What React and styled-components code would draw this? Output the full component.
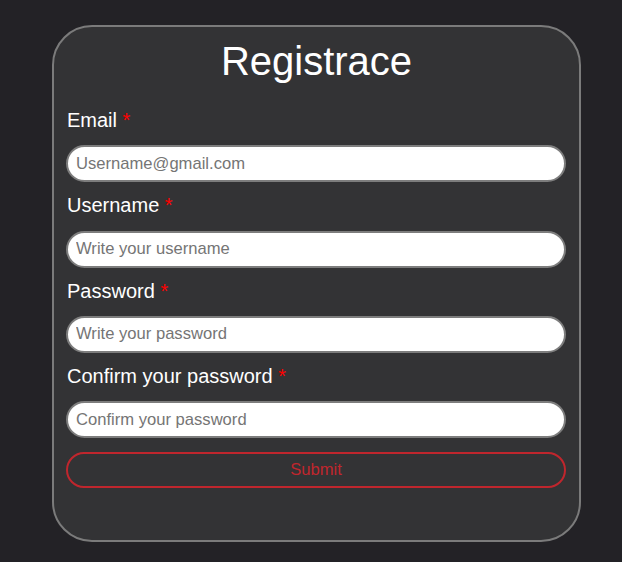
import styled, { createGlobalStyle } from "styled-components";

const fields = [
  { label: "Email", type: "email", placeholder: "Username@gmail.com" },
  { label: "Username", type: "text", placeholder: "Write your username" },
  { label: "Password", type: "password", placeholder: "Write your password" },
  { label: "Confirm your password", type: "password", placeholder: "Confirm your password" },
];

export default function App() {
  return (
    <>
      <GlobalStyle />
      <Page>
        <Card>
          <Title>Registrace</Title>
          <Form onSubmit={(e) => e.preventDefault()}>
            {fields.map(({ label, type, placeholder }) => (
              <Field key={label}>
                <Label>
                  {label} <Required>*</Required>
                </Label>
                <Input type={type} placeholder={placeholder} />
              </Field>
            ))}
            <Submit type="submit">Submit</Submit>
          </Form>
        </Card>
      </Page>
    </>
  );
}

// styles
const GlobalStyle = createGlobalStyle`
  html, body {
    margin: 0;
    padding: 0;
    background: #232226;
    font-family: "Liberation Sans", Arial, sans-serif;
  }
`;

const Page = styled.div`
  min-height: 562px;
  padding: 25px 0 0 52px;
  box-sizing: border-box;
`;

const Card = styled.div`
  width: 529px;
  height: 517px;
  box-sizing: border-box;
  background: #333335;
  border: 2px solid #7b7b7b;
  border-radius: 40px;
  padding: 11px 12px 0;
`;

const Title = styled.h1`
  margin: 0;
  color: #ffffff;
  font-size: 40px;
  font-weight: 400;
  line-height: 46px;
  text-align: center;
`;

const Form = styled.form`
  display: flex;
  flex-direction: column;
  gap: 12px;
  margin-top: 25px;
`;

const Field = styled.div`
  display: flex;
  flex-direction: column;
  gap: 13.25px;
`;

const Label = styled.label`
  color: #ffffff;
  font-size: 20px;
  line-height: 23px;
  padding-left: 1px;
`;

const Required = styled.span`
  color: #ff0000;
`;

const Input = styled.input`
  width: 500px;
  height: 37px;
  box-sizing: border-box;
  border: 2px solid #7d7d7d;
  border-radius: 20px;
  background: #ffffff;
  padding: 0 8px;
  font-family: "Liberation Sans", Arial, sans-serif;
  font-size: 16.6px;
  color: #222;
  outline: none;

  &::placeholder {
    color: #757575;
  }
`;

const Submit = styled.button`
  width: 500px;
  height: 36px;
  margin-top: 2px;
  box-sizing: border-box;
  border: 2px solid #c0262d;
  border-radius: 20px;
  background: transparent;
  color: #c0262d;
  font-family: "Liberation Sans", Arial, sans-serif;
  font-size: 16.6px;
  cursor: pointer;
`;
